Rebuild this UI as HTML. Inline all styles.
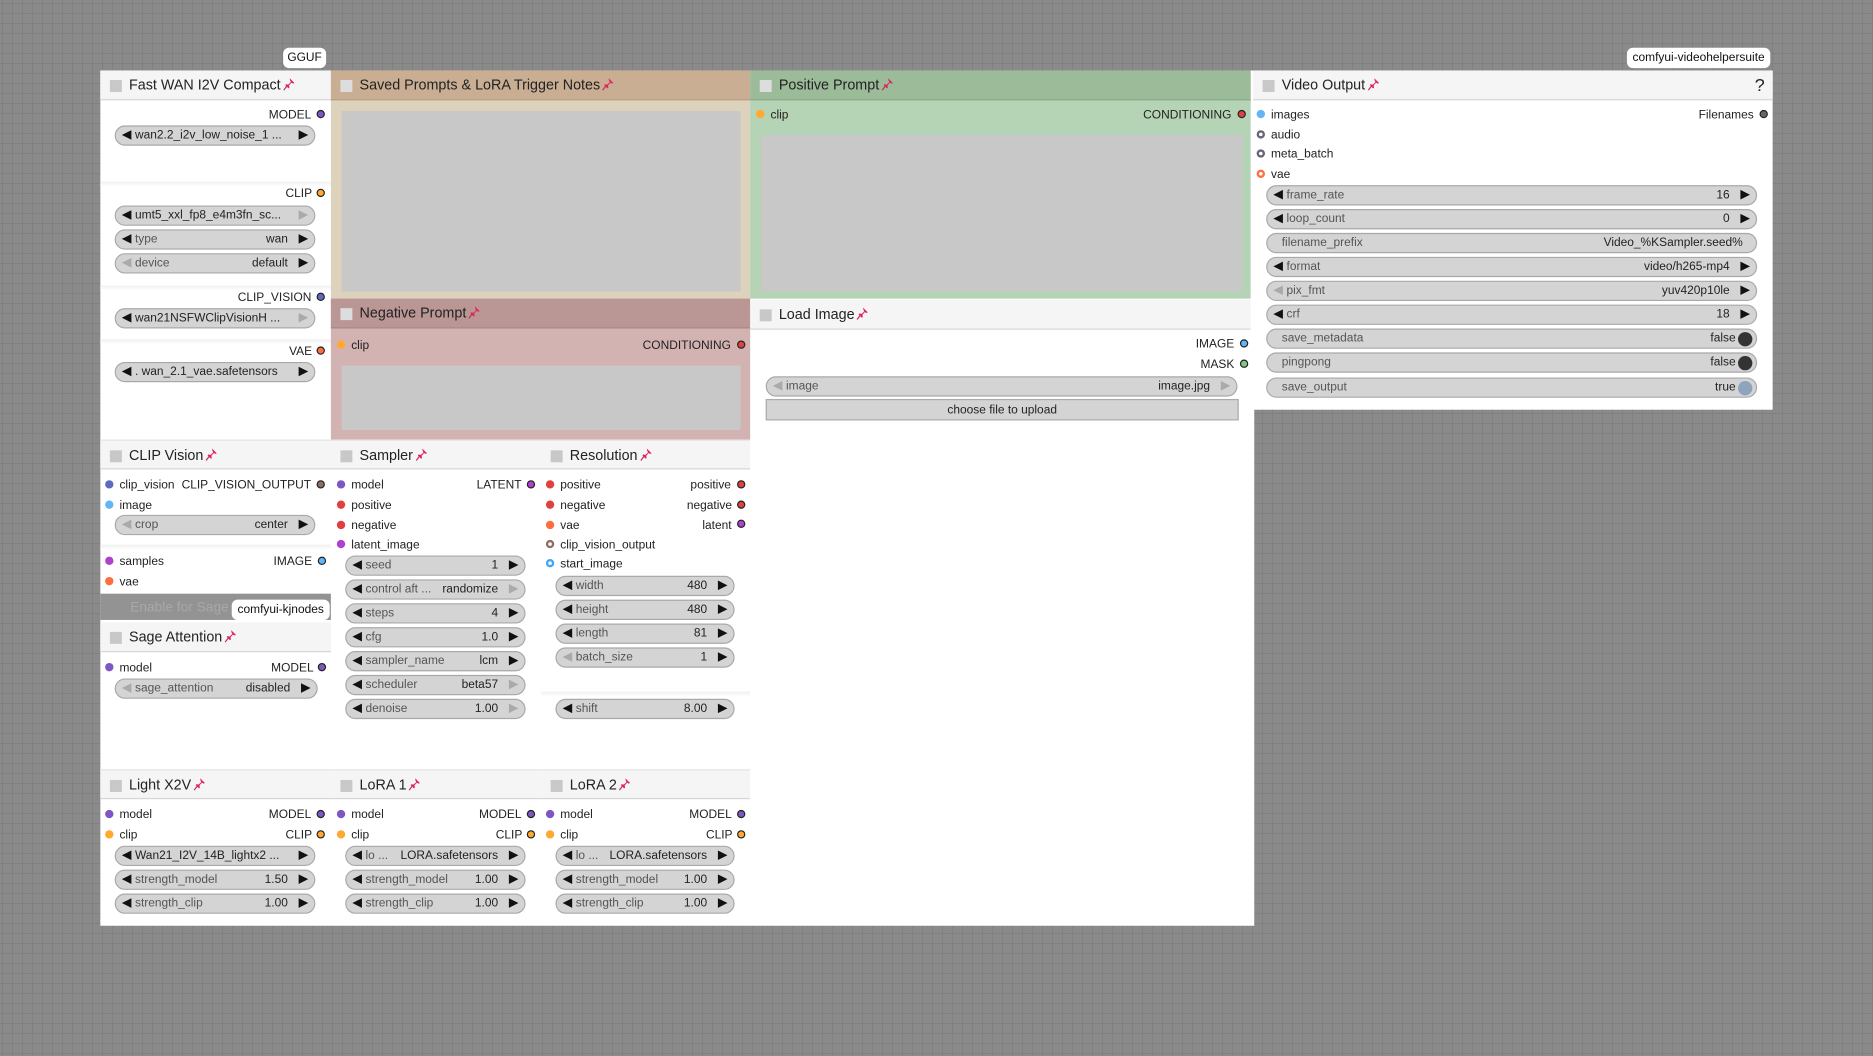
<!DOCTYPE html>
<html><head><meta charset="utf-8"><style>
html,body{margin:0;padding:0;width:1873px;height:1056px;overflow:hidden}
body{background-color:#8a8a8a;background-image:linear-gradient(90deg,#808080 1px,transparent 1px),linear-gradient(#808080 1px,transparent 1px);background-size:10px 10px;background-position:2px 3px;font-family:"Liberation Sans",sans-serif;color:#222}
#c{position:absolute;left:0;top:0;width:1568px;height:884px;transform:scale(1.19452);transform-origin:0 0}
#c div,#c span,#c i{position:absolute;box-sizing:border-box}
.bg{background:#fff}
.t{height:25px;background:#f5f5f5;border-bottom:1px solid #d6d6d6;font-size:12px;line-height:25px;color:#222}
.t b{position:absolute;left:8px;top:8px;width:10px;height:10px;background:#c8c8c8}
.t span{left:24px;top:0;white-space:nowrap;font-weight:normal}
.pin{display:inline-block;position:relative!important;width:10px;height:11px;vertical-align:-1px;margin-left:2px}
.s{font-size:10px;line-height:12px;white-space:nowrap;margin-top:1px}
.d{width:7px;height:7px;border-radius:50%}
.o{border:1px solid #222}
.w{height:17px;border:1px solid #a9a9a9;border-radius:9px;background:#d4d4d4;font-size:10px;line-height:16px;white-space:nowrap;overflow:hidden}
.w .k{left:16px;top:0;color:#555}
.w .v{right:22px;top:0;color:#222}
.w .l{left:5px;top:3px;width:0;height:0;border-top:4.5px solid transparent;border-bottom:4.5px solid transparent;border-right:8px solid #111}
.w .r{right:5px;top:3px;width:0;height:0;border-top:4.5px solid transparent;border-bottom:4.5px solid transparent;border-left:8px solid #111}
.w .g{border-right-color:#aaa;border-left-color:#aaa}
.w.n .k{left:12px}
.w .tg{right:3px;top:2px;width:12px;height:12px;border-radius:50%;background:#333}
.ta{background:#c8c8c8}
.sep{height:4px;background:linear-gradient(#f0f0f0,#fff)}
.badge{background:#fff;border-radius:5px;font-size:10px;line-height:17px;height:17px;text-align:center;color:#111}
</style></head><body><div id="c">
<svg width="0" height="0" style="position:absolute"><defs><symbol id="p" viewBox="0 0 10 11"><path d="M5.5 0.5 L9.5 4.5 L8.5 5 L7 4.3 L5 6.5 L5.3 8.5 L4.5 9 L1.8 6.3 L2.3 5.5 L4.3 5.8 L6.5 3.8 L5.8 2.3 Z" fill="#e0245e"/><path d="M3 7.2 L0.5 10.5" stroke="#c0304e" stroke-width="1"/></symbol></defs></svg>

<div class="badge" style="left:237px;top:40px;width:36px">GGUF</div>
<div class="badge" style="left:1362px;top:40px;width:120px">comfyui-videohelpersuite</div>

<div class="bg" style="left:84px;top:59px;width:966px;height:716px"></div>

<!-- Fast WAN -->
<div class="t" style="left:84px;top:59px;width:193px"><b></b><span>Fast WAN I2V Compact<svg class="pin"><use href="#p"/></svg></span></div>
<span class="s" style="left:225px;top:90px">MODEL</span><div class="d o" style="left:265px;top:92px;background:#7e57c2"></div>
<div class="w" style="left:96px;top:105px;width:168px"><i class="l"></i><span class="k" style="color:#222">wan2.2_i2v_low_noise_1 ...</span><i class="r"></i></div>
<div class="sep" style="left:84px;top:152px;width:193px"></div>
<span class="s" style="left:239px;top:156px">CLIP</span><div class="d o" style="left:265px;top:158px;background:#ffa931"></div>
<div class="w" style="left:96px;top:172px;width:168px"><i class="l"></i><span class="k" style="color:#222">umt5_xxl_fp8_e4m3fn_sc...</span><i class="r g"></i></div>
<div class="w" style="left:96px;top:192px;width:168px"><i class="l"></i><span class="k">type</span><span class="v">wan</span><i class="r"></i></div>
<div class="w" style="left:96px;top:212px;width:168px"><i class="l g"></i><span class="k">device</span><span class="v">default</span><i class="r"></i></div>
<div class="sep" style="left:84px;top:239px;width:193px"></div>
<span class="s" style="left:199px;top:243px">CLIP_VISION</span><div class="d o" style="left:265px;top:245px;background:#5c6bc0"></div>
<div class="w" style="left:96px;top:258px;width:168px"><i class="l"></i><span class="k" style="color:#222">wan21NSFWClipVisionH ...</span><i class="r g"></i></div>
<div class="sep" style="left:84px;top:284px;width:193px"></div>
<span class="s" style="left:242px;top:288px">VAE</span><div class="d o" style="left:265px;top:290px;background:#ff6e40"></div>
<div class="w" style="left:96px;top:303px;width:168px"><i class="l"></i><span class="k" style="color:#222">. wan_2.1_vae.safetensors</span><i class="r"></i></div>

<!-- Saved prompts -->
<div style="left:277px;top:59px;width:351px;height:191px;background:#ddd2bb"></div>
<div class="t" style="left:277px;top:59px;width:351px;background:#c9ae94;border-bottom-color:#b8a088"><b style="background:#ddd"></b><span>Saved Prompts &amp; LoRA Trigger Notes<svg class="pin"><use href="#p"/></svg></span></div>
<div class="ta" style="left:286px;top:93px;width:334px;height:151px"></div>

<!-- Negative -->
<div style="left:277px;top:250px;width:351px;height:118px;background:#d3b2b2"></div>
<div class="t" style="left:277px;top:250px;width:351px;background:#ba9694;border-bottom-color:#a88"><b style="background:#ddd"></b><span>Negative Prompt<svg class="pin"><use href="#p"/></svg></span></div>
<div class="d" style="left:282px;top:285px;background:#ffa931"></div><span class="s" style="left:294px;top:283px">clip</span>
<span class="s" style="left:538px;top:283px">CONDITIONING</span><div class="d o" style="left:617px;top:285px;background:#e04040"></div>
<div class="ta" style="left:286px;top:306px;width:334px;height:54px"></div>

<!-- Positive -->
<div style="left:628px;top:59px;width:419px;height:191px;background:#b5d3b5"></div>
<div class="t" style="left:628px;top:59px;width:419px;background:#9bbb99;border-bottom-color:#8aa888"><b style="background:#ddd"></b><span>Positive Prompt<svg class="pin"><use href="#p"/></svg></span></div>
<div class="d" style="left:633px;top:92px;background:#ffa931"></div><span class="s" style="left:645px;top:90px">clip</span>
<span class="s" style="left:957px;top:90px">CONDITIONING</span><div class="d o" style="left:1036px;top:92px;background:#e04040"></div>
<div class="ta" style="left:637px;top:113px;width:403px;height:131px"></div>

<!-- Load Image -->
<div class="t" style="left:628px;top:251px;width:419px"><b></b><span>Load Image<svg class="pin"><use href="#p"/></svg></span></div>
<span class="s" style="left:1001px;top:282px">IMAGE</span><div class="d o" style="left:1038px;top:284px;background:#64b5f6"></div>
<span class="s" style="left:1005px;top:299px">MASK</span><div class="d o" style="left:1038px;top:301px;background:#81c784"></div>
<div class="w" style="left:641px;top:315px;width:395px"><i class="l g"></i><span class="k">image</span><span class="v">image.jpg</span><i class="r g"></i></div>
<div style="left:641px;top:334px;width:396px;height:18px;background:#d4d4d4;border:1px solid #aaa;font-size:10px;line-height:17px;text-align:center">choose file to upload</div>

<!-- Video Output -->
<div class="bg" style="left:1049px;top:59px;width:435px;height:284px"></div>
<div class="t" style="left:1049px;top:59px;width:435px"><b></b><span>Video Output<svg class="pin"><use href="#p"/></svg></span><span style="left:420px;font-size:15px">?</span></div>
<div class="d" style="left:1052px;top:92px;background:#64b5f6"></div><span class="s" style="left:1064px;top:90px">images</span>
<span class="s" style="left:1422px;top:90px">Filenames</span><div class="d o" style="left:1473px;top:92px;background:#666"></div>
<div class="d" style="left:1052px;top:109px;border:2px solid #667;background:#fff"></div><span class="s" style="left:1064px;top:107px">audio</span>
<div class="d" style="left:1052px;top:125px;border:2px solid #667;background:#fff"></div><span class="s" style="left:1064px;top:123px">meta_batch</span>
<div class="d" style="left:1052px;top:142px;border:2px solid #ff6e40;background:#fff"></div><span class="s" style="left:1064px;top:140px">vae</span>
<div class="w" style="left:1060px;top:155px;width:411px"><i class="l"></i><span class="k">frame_rate</span><span class="v">16</span><i class="r"></i></div>
<div class="w" style="left:1060px;top:175px;width:411px"><i class="l"></i><span class="k">loop_count</span><span class="v">0</span><i class="r"></i></div>
<div class="w n" style="left:1060px;top:195px;width:411px"><span class="k">filename_prefix</span><span class="v" style="right:11px">Video_%KSampler.seed%</span></div>
<div class="w" style="left:1060px;top:215px;width:411px"><i class="l"></i><span class="k">format</span><span class="v">video/h265-mp4</span><i class="r"></i></div>
<div class="w" style="left:1060px;top:235px;width:411px"><i class="l g"></i><span class="k">pix_fmt</span><span class="v">yuv420p10le</span><i class="r"></i></div>
<div class="w" style="left:1060px;top:255px;width:411px"><i class="l"></i><span class="k">crf</span><span class="v">18</span><i class="r"></i></div>
<div class="w n" style="left:1060px;top:275px;width:411px"><span class="k">save_metadata</span><span class="v" style="right:17px">false</span><i class="tg"></i></div>
<div class="w n" style="left:1060px;top:295px;width:411px"><span class="k">pingpong</span><span class="v" style="right:17px">false</span><i class="tg"></i></div>
<div class="w n" style="left:1060px;top:316px;width:411px"><span class="k">save_output</span><span class="v" style="right:17px">true</span><i class="tg" style="background:#8fa3bf"></i></div>

<!-- CLIP Vision -->
<div class="t" style="left:84px;top:368px;width:193px;border-top:1px solid #e4e4e4"><b></b><span>CLIP Vision<svg class="pin"><use href="#p"/></svg></span></div>
<div class="d" style="left:88px;top:402px;background:#5c6bc0"></div><span class="s" style="left:100px;top:400px">clip_vision</span>
<span class="s" style="left:152px;top:400px">CLIP_VISION_OUTPUT</span><div class="d o" style="left:265px;top:402px;background:#8d6e63"></div>
<div class="d" style="left:88px;top:419px;background:#64b5f6"></div><span class="s" style="left:100px;top:417px">image</span>
<div class="w" style="left:96px;top:431px;width:168px"><i class="l g"></i><span class="k">crop</span><span class="v">center</span><i class="r"></i></div>
<div class="sep" style="left:84px;top:456px;width:193px"></div>
<div class="d" style="left:88px;top:466px;background:#b040d0"></div><span class="s" style="left:100px;top:464px">samples</span>
<span class="s" style="left:229px;top:464px">IMAGE</span><div class="d o" style="left:266px;top:466px;background:#64b5f6"></div>
<div class="d" style="left:88px;top:483px;background:#ff6e40"></div><span class="s" style="left:100px;top:481px">vae</span>
<div style="left:84px;top:497px;width:193px;height:22px;background:#939393"></div>
<span style="left:109px;top:503px;font-size:11.5px;color:#a8a8a8">Enable for Sage</span>
<div class="badge" style="left:194px;top:502px;width:82px">comfyui-kjnodes</div>
<div class="t" style="left:84px;top:521px;width:193px"><b></b><span>Sage Attention<svg class="pin"><use href="#p"/></svg></span></div>
<div class="d" style="left:88px;top:555px;background:#7e57c2"></div><span class="s" style="left:100px;top:553px">model</span>
<span class="s" style="left:227px;top:553px">MODEL</span><div class="d o" style="left:266px;top:555px;background:#7e57c2"></div>
<div class="w" style="left:96px;top:568px;width:170px"><i class="l g"></i><span class="k">sage_attention</span><span class="v">disabled</span><i class="r"></i></div>

<!-- Sampler -->
<div class="t" style="left:277px;top:368px;width:176px;border-top:1px solid #e4e4e4"><b></b><span>Sampler<svg class="pin"><use href="#p"/></svg></span></div>
<div class="d" style="left:282px;top:402px;background:#7e57c2"></div><span class="s" style="left:294px;top:400px">model</span>
<span class="s" style="left:399px;top:400px">LATENT</span><div class="d o" style="left:441px;top:402px;background:#b040d0"></div>
<div class="d" style="left:282px;top:419px;background:#e04040"></div><span class="s" style="left:294px;top:417px">positive</span>
<div class="d" style="left:282px;top:436px;background:#e04040"></div><span class="s" style="left:294px;top:434px">negative</span>
<div class="d" style="left:282px;top:452px;background:#b040d0"></div><span class="s" style="left:294px;top:450px">latent_image</span>
<div class="w" style="left:289px;top:465px;width:151px"><i class="l"></i><span class="k">seed</span><span class="v">1</span><i class="r"></i></div>
<div class="w" style="left:289px;top:485px;width:151px"><i class="l"></i><span class="k">control aft ...</span><span class="v">randomize</span><i class="r g"></i></div>
<div class="w" style="left:289px;top:505px;width:151px"><i class="l"></i><span class="k">steps</span><span class="v">4</span><i class="r"></i></div>
<div class="w" style="left:289px;top:525px;width:151px"><i class="l"></i><span class="k">cfg</span><span class="v">1.0</span><i class="r"></i></div>
<div class="w" style="left:289px;top:545px;width:151px"><i class="l"></i><span class="k">sampler_name</span><span class="v">lcm</span><i class="r"></i></div>
<div class="w" style="left:289px;top:565px;width:151px"><i class="l"></i><span class="k">scheduler</span><span class="v">beta57</span><i class="r g"></i></div>
<div class="w" style="left:289px;top:585px;width:151px"><i class="l"></i><span class="k">denoise</span><span class="v">1.00</span><i class="r g"></i></div>

<!-- Resolution -->
<div class="t" style="left:453px;top:368px;width:175px;border-top:1px solid #e4e4e4"><b></b><span>Resolution<svg class="pin"><use href="#p"/></svg></span></div>
<div class="d" style="left:457px;top:402px;background:#e04040"></div><span class="s" style="left:469px;top:400px">positive</span>
<span class="s" style="left:578px;top:400px">positive</span><div class="d o" style="left:617px;top:402px;background:#e04040"></div>
<div class="d" style="left:457px;top:419px;background:#e04040"></div><span class="s" style="left:469px;top:417px">negative</span>
<span class="s" style="left:575px;top:417px">negative</span><div class="d o" style="left:617px;top:419px;background:#e04040"></div>
<div class="d" style="left:457px;top:436px;background:#ff6e40"></div><span class="s" style="left:469px;top:434px">vae</span>
<span class="s" style="left:588px;top:434px">latent</span><div class="d o" style="left:617px;top:435px;background:#b040d0"></div>
<div class="d" style="left:457px;top:452px;border:2px solid #8d6e63;background:#fff"></div><span class="s" style="left:469px;top:450px">clip_vision_output</span>
<div class="d" style="left:457px;top:468px;border:2px solid #42a5f5;background:#fff"></div><span class="s" style="left:469px;top:466px">start_image</span>
<div class="w" style="left:465px;top:482px;width:150px"><i class="l"></i><span class="k">width</span><span class="v">480</span><i class="r"></i></div>
<div class="w" style="left:465px;top:502px;width:150px"><i class="l"></i><span class="k">height</span><span class="v">480</span><i class="r"></i></div>
<div class="w" style="left:465px;top:522px;width:150px"><i class="l"></i><span class="k">length</span><span class="v">81</span><i class="r"></i></div>
<div class="w" style="left:465px;top:542px;width:150px"><i class="l g"></i><span class="k">batch_size</span><span class="v">1</span><i class="r"></i></div>
<div class="sep" style="left:453px;top:579px;width:175px"></div>
<div class="w" style="left:465px;top:585px;width:150px"><i class="l"></i><span class="k">shift</span><span class="v">8.00</span><i class="r"></i></div>

<!-- bottom row -->
<div class="t" style="left:84px;top:644px;width:193px;border-top:1px solid #e4e4e4"><b></b><span>Light X2V<svg class="pin"><use href="#p"/></svg></span></div>
<div class="d" style="left:88px;top:678px;background:#7e57c2"></div><span class="s" style="left:100px;top:676px">model</span>
<span class="s" style="left:225px;top:676px">MODEL</span><div class="d o" style="left:265px;top:678px;background:#7e57c2"></div>
<div class="d" style="left:88px;top:695px;background:#ffa931"></div><span class="s" style="left:100px;top:693px">clip</span>
<span class="s" style="left:239px;top:693px">CLIP</span><div class="d o" style="left:265px;top:695px;background:#ffa931"></div>
<div class="w" style="left:96px;top:708px;width:168px"><i class="l"></i><span class="k" style="color:#222">Wan21_I2V_14B_lightx2 ...</span><i class="r"></i></div>
<div class="w" style="left:96px;top:728px;width:168px"><i class="l"></i><span class="k">strength_model</span><span class="v">1.50</span><i class="r"></i></div>
<div class="w" style="left:96px;top:748px;width:168px"><i class="l"></i><span class="k">strength_clip</span><span class="v">1.00</span><i class="r"></i></div>

<div class="t" style="left:277px;top:644px;width:176px;border-top:1px solid #e4e4e4"><b></b><span>LoRA 1<svg class="pin"><use href="#p"/></svg></span></div>
<div class="d" style="left:282px;top:678px;background:#7e57c2"></div><span class="s" style="left:294px;top:676px">model</span>
<span class="s" style="left:401px;top:676px">MODEL</span><div class="d o" style="left:441px;top:678px;background:#7e57c2"></div>
<div class="d" style="left:282px;top:695px;background:#ffa931"></div><span class="s" style="left:294px;top:693px">clip</span>
<span class="s" style="left:415px;top:693px">CLIP</span><div class="d o" style="left:441px;top:695px;background:#ffa931"></div>
<div class="w" style="left:289px;top:708px;width:151px"><i class="l"></i><span class="k">lo ...</span><span class="v">LORA.safetensors</span><i class="r"></i></div>
<div class="w" style="left:289px;top:728px;width:151px"><i class="l"></i><span class="k">strength_model</span><span class="v">1.00</span><i class="r"></i></div>
<div class="w" style="left:289px;top:748px;width:151px"><i class="l"></i><span class="k">strength_clip</span><span class="v">1.00</span><i class="r"></i></div>

<div class="t" style="left:453px;top:644px;width:175px;border-top:1px solid #e4e4e4"><b></b><span>LoRA 2<svg class="pin"><use href="#p"/></svg></span></div>
<div class="d" style="left:457px;top:678px;background:#7e57c2"></div><span class="s" style="left:469px;top:676px">model</span>
<span class="s" style="left:577px;top:676px">MODEL</span><div class="d o" style="left:617px;top:678px;background:#7e57c2"></div>
<div class="d" style="left:457px;top:695px;background:#ffa931"></div><span class="s" style="left:469px;top:693px">clip</span>
<span class="s" style="left:591px;top:693px">CLIP</span><div class="d o" style="left:617px;top:695px;background:#ffa931"></div>
<div class="w" style="left:465px;top:708px;width:150px"><i class="l"></i><span class="k">lo ...</span><span class="v">LORA.safetensors</span><i class="r"></i></div>
<div class="w" style="left:465px;top:728px;width:150px"><i class="l"></i><span class="k">strength_model</span><span class="v">1.00</span><i class="r"></i></div>
<div class="w" style="left:465px;top:748px;width:150px"><i class="l"></i><span class="k">strength_clip</span><span class="v">1.00</span><i class="r"></i></div>
</div></body></html>
